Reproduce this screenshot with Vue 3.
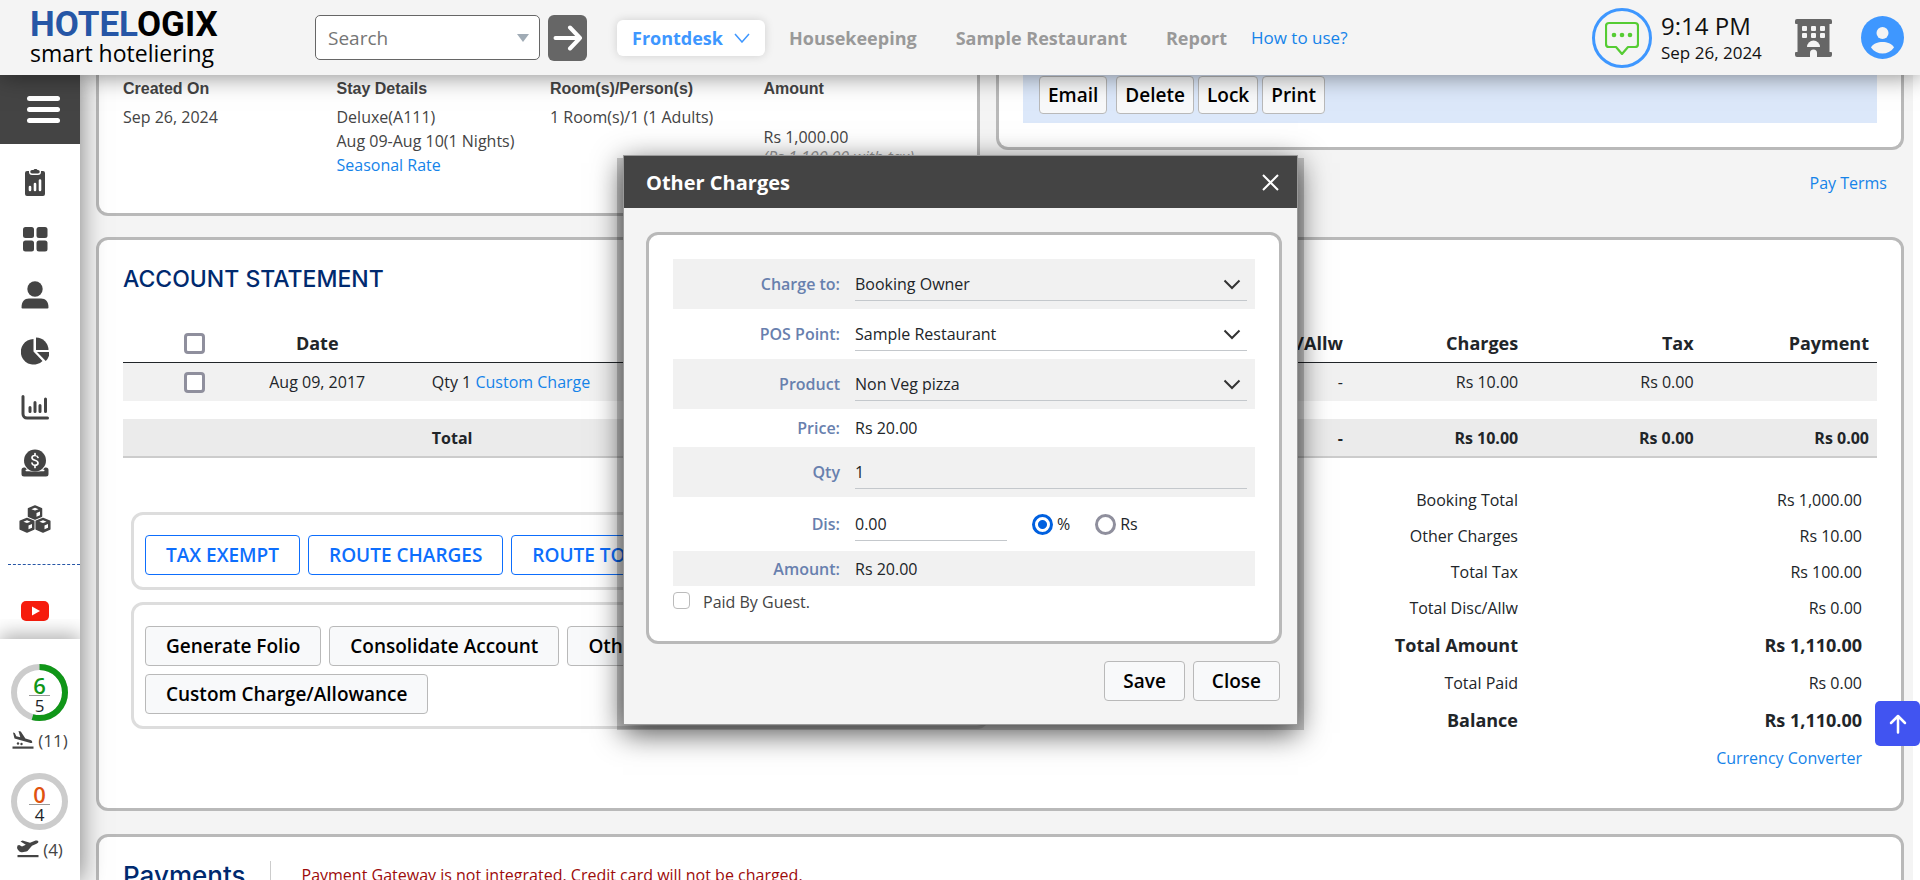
<script setup>
import { ref } from 'vue'

const tabs = ['Housekeeping', 'Sample Restaurant', 'Report']
const search = ref('')
const chargeTo = ref('Booking Owner')
const posPoint = ref('Sample Restaurant')
const product = ref('Non Veg pizza')
const qty = ref('1')
const discount = ref('0.00')
const discountType = ref('percent')
const paidByGuest = ref(false)

const totals = [
  { label: 'Booking Total', value: 'Rs 1,000.00' },
  { label: 'Other Charges', value: 'Rs 10.00' },
  { label: 'Total Tax', value: 'Rs 100.00' },
  { label: 'Total Disc/Allw', value: 'Rs 0.00' },
  { label: 'Total Amount', value: 'Rs 1,110.00', strong: true },
  { label: 'Total Paid', value: 'Rs 0.00' },
  { label: 'Balance', value: 'Rs 1,110.00', strong: true },
]
</script>

<template>
  <div class="app">
    <header class="topbar">
      <a class="logo" href="#" aria-label="Hotelogix smart hoteliering">
        <span class="logo-name"><span class="logo-blue">HOTEL</span>OGIX</span>
        <span class="logo-tag">smart hoteliering</span>
      </a>
      <form class="search" @submit.prevent>
        <div class="search-box">
          <input v-model="search" type="text" placeholder="Search" aria-label="Search" />
          <svg width="12" height="8" viewBox="0 0 12 8"><path d="M0 0h12L6 8z" fill="#a0abb5" /></svg>
        </div>
        <button class="go" type="submit" aria-label="Go">
          <svg width="30" height="26" viewBox="0 0 30 26" fill="none" stroke="#fff" stroke-width="4" stroke-linecap="round" stroke-linejoin="round"><path d="M2.500 13H27M17 2.500L27 13L17 23.500" /></svg>
        </button>
      </form>
      <nav class="tabs">
        <a class="tab active" href="#">Frontdesk
          <svg width="16" height="10" viewBox="0 0 16 10" fill="none" stroke="#3e97ff" stroke-width="1.500"><path d="M1 1l7 8l7-8" /></svg>
        </a>
        <a v-for="t in tabs" :key="t" class="tab" href="#">{{ t }}</a>
        <a class="help" href="#">How to use?</a>
      </nav>
      <div class="status">
        <button class="chat" aria-label="Messages">
          <svg width="34" height="34" viewBox="0 0 34 34" fill="none" stroke="#55cc33" stroke-width="2.200" stroke-linejoin="round">
            <path d="M4 2h26a3 3 0 0 1 3 3v18a3 3 0 0 1-3 3h-7l-6 7l-6-7H4a3 3 0 0 1-3-3V5a3 3 0 0 1 3-3z" />
            <g fill="#55cc33" stroke="none"><circle cx="9" cy="14" r="2.300" /><circle cx="17" cy="14" r="2.300" /><circle cx="25" cy="14" r="2.300" /></g>
          </svg>
        </button>
        <div class="clock"><span class="time">9:14 PM</span><span class="date">Sep 26, 2024</span></div>
        <button class="plain hotel" aria-label="Property">
          <svg width="37" height="38" viewBox="0 0 37 38">
            <path fill="#666" fill-rule="evenodd" d="M2 0h33a2 2 0 0 1 2 2v2a1 1 0 0 1-1 1h-1.500v28H36a1 1 0 0 1 1 1v2a2 2 0 0 1-2 2H22v-4a3.500 3.500 0 0 0-7 0v4H2a2 2 0 0 1-2-2v-2a1 1 0 0 1 1-1h1.500V5H1a1 1 0 0 1-1-1V2a2 2 0 0 1 2-2z" />
            <g fill="#f4f4f4"><rect x="7" y="7" width="5" height="5" rx="1" /><rect x="16" y="7" width="5" height="5" rx="1" /><rect x="25" y="7" width="5" height="5" rx="1" /><rect x="7" y="14" width="5" height="5" rx="1" /><rect x="16" y="14" width="5" height="5" rx="1" /><rect x="25" y="14" width="5" height="5" rx="1" /><path d="M12 28a6.500 6.500 0 0 1 13 0z" /></g>
          </svg>
        </button>
        <button class="plain" aria-label="Profile">
          <svg width="43" height="43" viewBox="0 0 43 43"><circle cx="21.500" cy="21.500" r="21.500" fill="#3e97ff" /><circle cx="21.500" cy="17" r="6" fill="#f4f4f4" /><path d="M10 31.500c2-4 7-5.500 11.500-5.500S31 27.500 33 31.500c-3 4-7 6-11.500 6s-8.500-2-11.500-6z" fill="#f4f4f4" /></svg>
        </button>
      </div>
    </header>

    <div class="body">
      <aside class="sidebar">
        <button class="menu" aria-label="Menu"><span></span><span></span><span></span></button>
        <nav class="side-icons">
          <a href="#" aria-label="Reports"><svg width="28" height="28" viewBox="0 0 28 28"><path fill="#444" d="M6 2h2v1a3 3 0 0 0 3 3h6a3 3 0 0 0 3-3V2h2a2 2 0 0 1 2 2v21a2 2 0 0 1-2 2H6a2 2 0 0 1-2-2V4a2 2 0 0 1 2-2zM11 1h1.500l1-1h2l1 1H17a1.500 1.500 0 0 1 0 3.500h-6A1.500 1.500 0 0 1 11 1z" /><g stroke="#fff" stroke-width="2.600" stroke-linecap="round"><path d="M9 18v3M14 15v6M19 11.500V21" /></g></svg></a>
          <a href="#" aria-label="Dashboard"><svg width="28" height="28" viewBox="0 0 28 28" fill="#444"><rect x="2" y="2" width="11" height="11" rx="2.500" /><rect x="15.500" y="2" width="11" height="11" rx="2.500" /><rect x="2" y="15.500" width="11" height="11" rx="2.500" /><rect x="15.500" y="15.500" width="11" height="11" rx="2.500" /></svg></a>
          <a href="#" aria-label="Guests"><svg width="28" height="28" viewBox="0 0 28 28" fill="#444"><circle cx="14" cy="8" r="7.700" /><path d="M0.500 26.500c0-6 3-9 7.500-9h12c4.500 0 7.500 3 7.500 9a1 1 0 0 1-1 1h-25a1 1 0 0 1-1-1z" /></svg></a>
          <a href="#" aria-label="Analytics"><svg width="28" height="28" viewBox="0 0 28 28" fill="#444"><path d="M12.500 2v12.500l9 9.500A12.800 12.800 0 1 1 12.500 2z" /><path d="M15 0.500A12.500 12.500 0 0 1 27.500 13H15z" /><path d="M16 15h12.500a12 12 0 0 1-3.800 9z" /></svg></a>
          <a href="#" aria-label="Charts"><svg width="28" height="28" viewBox="0 0 28 28" fill="none" stroke="#444" stroke-width="3" stroke-linecap="round"><path d="M2 3.500V21a4 4 0 0 0 4 4h20.500" /><path d="M9 14.500v4M14 9.500v9M19 12.500v6M24.500 6v12.500" /></svg></a>
          <a href="#" aria-label="Cashier"><svg width="28" height="28" viewBox="0 0 28 28"><path fill="#444" d="M3 18.500h22a2.500 2.500 0 0 1 2.500 2.500v4a2.500 2.500 0 0 1-2.500 2.500H3A2.500 2.500 0 0 1 .5 25v-4A2.500 2.500 0 0 1 3 18.500z" /><path d="M5.500 21.500h17" stroke="#fff" stroke-width="2" stroke-linecap="round" /><circle cx="14" cy="11.500" r="12" fill="#fff" /><circle cx="14" cy="11.500" r="11" fill="#444" /><path d="M17 8.500c-.5-1.500-1.700-2-3-2c-1.800 0-3 1-3 2.300c0 3.300 6 1.700 6 5.200c0 1.400-1.300 2.300-3 2.300c-1.500 0-2.800-.8-3-2.300M14 4.500v2M14 16.500v2" fill="none" stroke="#fff" stroke-width="1.700" stroke-linecap="round" /><path d="M4 24h20" stroke="#444" stroke-width="3" /></svg></a>
          <a href="#" aria-label="Inventory"><svg width="32" height="28" viewBox="0 0 32 28"><g fill="#444" stroke="#444" stroke-width="1.500" stroke-linejoin="round"><path d="M16 1l6.500 2.800v7.400L16 14l-6.500-2.800V3.800z" /><path d="M8 13.500l6.800 2.800V24L8 27l-6.800-3v-7.700z" /><path d="M24 13.500l6.800 2.800V24L24 27l-6.800-3v-7.700z" /></g><g fill="#fff"><path d="M16 2.800l3.600 1.400L16 5.600l-3.600-1.400zM8 15.300l3.600 1.400L8 18.100l-3.600-1.400zM24 15.300l3.600 1.400L24 18.100l-3.600-1.400zM17.500 8l3.500-1.400v3.600l-3.500 1.600zM9.500 20.500l3.500-1.400v3.600l-3.500 1.600zM25.500 20.500l3.500-1.400v3.600l-3.500 1.600z" /></g></svg></a>
        </nav>
        <hr class="dash" />
        <a class="youtube" href="#" aria-label="Videos"><svg width="28" height="20" viewBox="0 0 28 20"><rect width="28" height="20" rx="5" fill="#f61c0d" /><path d="M11 5.500l8 4.500l-8 4.500z" fill="#fff" /></svg></a>
        <div class="counters">
          <div class="counter">
            <div class="ring">
              <svg width="57" height="57" viewBox="0 0 57 57" fill="none" stroke-width="6"><circle cx="28.500" cy="28.500" r="25.500" stroke="#ccc" /><circle cx="28.500" cy="28.500" r="25.500" stroke="#109618" pathLength="100" stroke-dasharray="54.500 100" transform="rotate(-90 28.5 28.5)" /></svg>
              <div class="fraction"><b class="green">6</b><span>5</span></div>
            </div>
            <div class="moves">
              <svg width="22" height="18" viewBox="0 0 22 18" fill="#444"><path d="M1 1.500l1.800.5l1.500 3.200l4 1.100L6.500 0l2.300.6l4.600 7l5 1.400c1.600.5 2 1.500 1.800 2.800c-1 .3-1.700.2-2.500 0L2.500 7.600z" /><circle cx="6" cy="12.500" r="1.200" /><circle cx="9.500" cy="13" r="1.200" /><rect x="0.500" y="15.500" width="21" height="2.200" /></svg>
              <span>(11)</span>
            </div>
          </div>
          <div class="counter">
            <div class="ring">
              <svg width="57" height="57" viewBox="0 0 57 57" fill="none" stroke-width="6"><circle cx="28.500" cy="28.500" r="25.500" stroke="#ccc" /></svg>
              <div class="fraction"><b class="orange">0</b><span>4</span></div>
            </div>
            <div class="moves">
              <svg width="22" height="18" viewBox="0 0 22 18" fill="#444"><path d="M.5 5.500l1.700-.6l2.800 1.500l3.800-1.700L3.500 1.500l2-1l7.500 2.200l5-2c1.700-.5 3 0 3.500 1c-.4 1-1 1.500-2 2l-4.500 2l-4.500 5.300c-2 1-5 1.500-7 1c-1.500-.5-2.500-2-3.500-4z" /><rect x="0.500" y="15" width="21" height="2.200" /></svg>
              <span>(4)</span>
            </div>
          </div>
        </div>
      </aside>

      <main class="content">
        <div class="top-row">
          <section class="card booking">
            <div class="fact"><h3>Created On</h3><p>Sep 26, 2024</p></div>
            <div class="fact"><h3>Stay Details</h3><p>Deluxe(A111)</p><p>Aug 09-Aug 10(1 Nights)</p><p><a href="#">Seasonal Rate</a></p></div>
            <div class="fact"><h3>Room(s)/Person(s)</h3><p>1 Room(s)/1 (1 Adults)</p></div>
            <div class="fact amount"><h3>Amount</h3><p>Rs 1,000.00</p><p class="muted">(Rs 1,100.00 with tax)</p></div>
          </section>
          <div>
            <section class="card actions-card">
              <div class="actions"><button class="btn first">Email</button><button class="btn">Delete</button><button class="btn">Lock</button><button class="btn">Print</button></div>
            </section>
            <div class="terms"><a href="#">Pay Terms</a></div>
          </div>
        </div>

        <section class="card account">
          <h2>ACCOUNT STATEMENT</h2>
          <table class="statement">
            <colgroup><col class="c-check" /><col class="c-date" /><col /><col class="c-num" /><col class="c-num" /><col class="c-num" /><col class="c-num" /></colgroup>
            <thead>
              <tr><th class="check"><input type="checkbox" aria-label="Select all" /></th><th class="mid">Date</th><th class="left"></th><th>Disc/Allw</th><th>Charges</th><th>Tax</th><th>Payment</th></tr>
            </thead>
            <tbody>
              <tr class="line"><td class="check"><input type="checkbox" aria-label="Select Aug 09, 2017" /></td><td class="mid">Aug 09, 2017</td><td class="left">Qty 1 <a href="#">Custom Charge</a></td><td>-</td><td>Rs 10.00</td><td>Rs 0.00</td><td></td></tr>
              <tr class="space"><td colspan="7"></td></tr>
            </tbody>
            <tfoot>
              <tr><td></td><td></td><td class="left">Total</td><td>-</td><td>Rs 10.00</td><td>Rs 0.00</td><td>Rs 0.00</td></tr>
            </tfoot>
          </table>
          <div class="lower">
            <div class="groups">
              <div class="group"><button class="btn blue">TAX EXEMPT</button><button class="btn blue">ROUTE CHARGES</button><button class="btn blue">ROUTE TO GROUP</button></div>
              <div class="group"><button class="btn">Generate Folio</button><button class="btn">Consolidate Account</button><button class="btn">Other Charges</button><button class="btn">Custom Charge/Allowance</button></div>
            </div>
            <div class="totals">
              <dl>
                <div v-for="t in totals" :key="t.label" :class="{ strong: t.strong }"><dt>{{ t.label }}</dt><dd>{{ t.value }}</dd></div>
              </dl>
              <a href="#">Currency Converter</a>
            </div>
          </div>
        </section>

        <section class="card payments">
          <h2>Payments</h2>
          <p>Payment Gateway is not integrated. Credit card will not be charged.</p>
        </section>
      </main>
    </div>

    <button class="to-top" aria-label="Back to top"><svg width="18" height="20" viewBox="0 0 18 20" fill="none" stroke="#fff" stroke-width="2.500" stroke-linecap="round" stroke-linejoin="round"><path d="M9 18.500V2M2 9l7-7l7 7" /></svg></button>

    <div class="dialog-wrap">
      <form class="dialog" role="dialog" aria-labelledby="dialog-title" @submit.prevent>
        <div class="dialog-head">
          <h2 id="dialog-title">Other Charges</h2>
          <button class="plain" type="button" aria-label="Dismiss"><svg width="17" height="17" viewBox="0 0 17 17" fill="none" stroke="#fff" stroke-width="2"><path d="M1 1l15 15M16 1L1 16" /></svg></button>
        </div>
        <div class="panel">
          <div class="field shade tall">
            <label for="charge-to">Charge to:</label>
            <div class="select"><select id="charge-to" v-model="chargeTo"><option>Booking Owner</option></select><svg width="18" height="11" viewBox="0 0 18 11"><path d="M1.500 1.500L9 9l7.500-7.500" /></svg></div>
          </div>
          <div class="field tall">
            <label for="pos-point">POS Point:</label>
            <div class="select"><select id="pos-point" v-model="posPoint"><option>Sample Restaurant</option></select><svg width="18" height="11" viewBox="0 0 18 11"><path d="M1.500 1.500L9 9l7.500-7.500" /></svg></div>
          </div>
          <div class="field shade tall">
            <label for="product">Product</label>
            <div class="select"><select id="product" v-model="product"><option>Non Veg pizza</option></select><svg width="18" height="11" viewBox="0 0 18 11"><path d="M1.500 1.500L9 9l7.500-7.500" /></svg></div>
          </div>
          <div class="field price"><span class="label">Price:</span><span>Rs 20.00</span></div>
          <div class="field shade tall"><label for="qty">Qty</label><input id="qty" v-model="qty" class="text" type="text" /></div>
          <div class="field taller">
            <label for="dis">Dis:</label>
            <div class="discount">
              <input id="dis" v-model="discount" class="text short" type="text" />
              <label class="option"><input v-model="discountType" type="radio" name="type" value="percent" />%</label>
              <label class="option"><input v-model="discountType" type="radio" name="type" value="rs" />Rs</label>
            </div>
          </div>
          <div class="field shade low"><span class="label">Amount:</span><span>Rs 20.00</span></div>
          <label class="guest"><input v-model="paidByGuest" type="checkbox" />Paid By Guest.</label>
        </div>
        <div class="dialog-foot"><button class="btn" type="submit">Save</button><button class="btn" type="button">Close</button></div>
      </form>
    </div>
  </div>
</template>

<style>
body { margin: 0; background: #fff; }
</style>

<style scoped>
* { box-sizing: border-box; }
.app { position: relative; height: 100vh; overflow: hidden; display: flex; flex-direction: column; font-family: "Open Sans", "Noto Sans", sans-serif; font-size: 16px; color: #212529; }
a { color: #1583e9; text-decoration: none; }
h2, h3, p, dl, dd { margin: 0; }
button, input, select { font-family: inherit; }
button { cursor: pointer; }
svg { display: block; flex: none; }
.plain { border: 0; background: none; padding: 0; }

.topbar { position: relative; z-index: 3; flex: none; height: 75px; display: flex; align-items: center; padding: 0 16px 0 30px; background: #f4f4f4; box-shadow: 0 0 24px rgba(0, 0, 0, 0.5); }
.logo { display: flex; flex-direction: column; width: 285px; color: #000; }
.logo-name { font: 700 35px/30px Roboto, sans-serif; }
.logo-blue { color: #2656a6; }
.logo-tag { font-size: 23px; line-height: 26px; }
.search { display: flex; align-items: center; gap: 8px; }
.search-box { display: flex; align-items: center; width: 225px; height: 45px; padding: 0 10px 0 12px; border: 1px solid #666; border-radius: 5px; background: #fff; }
.search-box input { flex: 1; min-width: 0; padding: 0; border: 0; outline: 0; background: none; font-size: 19px; }
.search-box input::placeholder { color: #757575; }
.go { display: grid; place-items: center; width: 39px; height: 46px; padding: 0; border: 0; border-radius: 6px; background: #666; }
.tabs { display: flex; align-items: center; gap: 9px; margin-left: 30px; }
.tab { display: flex; align-items: center; gap: 11px; height: 36px; padding: 0 15px; border-radius: 6px; font-size: 18px; font-weight: 700; color: #999; }
.active { background: #fff; color: #3e97ff; box-shadow: 0 0 10px rgba(0, 0, 0, 0.15); }
.help { font-size: 17px; }
.status { display: flex; align-items: center; margin-left: auto; }
.chat { display: grid; place-items: center; width: 60px; height: 60px; padding: 0; border: 3px solid #3e97ff; border-radius: 50%; background: none; }
.clock { display: flex; flex-direction: column; width: 143px; padding-left: 9px; color: #111; }
.time { font-size: 24px; line-height: 30px; }
.date { font-size: 17px; line-height: 24px; }
.hotel { margin-right: 29px; }

.body { flex: 1; min-height: 0; display: flex; background: #f4f4f4; margin-right: 7px; }
.sidebar { position: relative; z-index: 2; flex: none; display: flex; flex-direction: column; width: 80px; background: #fff; box-shadow: 0 0 24px rgba(0, 0, 0, 0.5); }
.menu { display: flex; flex-direction: column; gap: 6px; height: 69px; padding: 21px 20px 21px 27px; border: 0; background: #444; }
.menu span { height: 5px; width: 33px; border-radius: 3px; background: #fff; }
.side-icons { display: flex; flex-direction: column; align-items: center; gap: 28px; width: 70px; padding-top: 25px; }
.dash { width: 72px; margin: 31px 0 0 8px; border: 0; border-top: 1px dashed #2656a6; }
.youtube { margin: 36px 0 0 21px; }
.counters { flex: 1; display: flex; flex-direction: column; gap: 21px; margin-top: 18px; padding-top: 25px; background: #fff; box-shadow: 0 -5px 18px rgba(0, 0, 0, 0.3); clip-path: inset(-20px 0 0 0); }
.ring { position: relative; width: 57px; margin: 0 0 7px 11px; }
.fraction { position: absolute; inset: 0; display: flex; flex-direction: column; align-items: center; padding-top: 12px; }
.fraction b { width: 21px; border-bottom: 1px solid #999; font-size: 22px; line-height: 19px; font-weight: 600; text-align: center; }
.fraction span { font-size: 17px; line-height: 20px; }
.green { color: #109618; }
.orange { color: #e0530f; }
.moves { display: flex; align-items: center; justify-content: center; gap: 4px; height: 24px; font-size: 17px; color: #444; }

.content { flex: 1; min-width: 0; padding: 0 9px 0 16px; overflow: hidden; }
.card { border: 3px solid #b9b9b9; border-radius: 12px; background: #fff; }
.top-row { display: grid; grid-template-columns: 884fr 908fr; gap: 16px; height: 140px; }
.booking { display: grid; grid-template-columns: repeat(4, 1fr); padding: 2px 0 0 24px; border-top: 0; border-radius: 0 0 12px 12px; color: #444; }
.fact h3 { margin-bottom: 4px; font: 700 16px/24px "Liberation Sans", sans-serif; }
.fact p { font-size: 16px; line-height: 24px; white-space: nowrap; }
.amount p { line-height: 21px; }
.amount h3 { margin-bottom: 26px; }
.amount .muted { line-height: 18px; color: #999; font-style: italic; }
.actions-card { height: 75px; padding: 0 24px; border-top: 0; border-radius: 0 0 12px 12px; }
.actions { display: flex; gap: 4px; height: 48px; padding: 1px 16px; background: #dce8fa; }
.actions .btn { height: 38px; padding: 0 8px; }
.actions .first { margin-right: 5px; }
.terms { padding: 21px 17px; text-align: right; line-height: 24px; }

.btn { height: 40px; padding: 0 20px; border: 1px solid #b9b9b9; border-radius: 4px; background: #f8f9fa; color: #000; font-size: 19px; font-weight: 600; white-space: nowrap; }
.blue { border-color: #0d6efd; background: #fff; color: #0d6efd; }

.account { height: 574px; margin-top: 22px; padding: 24px 24px 0; }
.card > h2 { font: 500 23px/30px Inter, sans-serif; color: #002a6f; }
.statement { width: 100%; margin-top: 30px; table-layout: fixed; border-collapse: separate; border-spacing: 0; }
.c-check { width: 5%; }
.c-date { width: 12.150%; }
.c-num { width: 10%; }
.statement th, .statement td { height: 37px; padding: 0 8px; text-align: right; white-space: nowrap; }
.statement th { height: 39px; border-bottom: 1px solid #212529; font-size: 18px; }
.statement .line td { height: 38px; background: #f1f1f1; }
.statement .mid { text-align: center; }
.statement .left { text-align: left; }
.statement .check { padding-right: 6px; }
.statement .space td { height: 18px; }
.statement tfoot td { height: 39px; background: #ebebeb; border-bottom: 2px solid #ccc; font-weight: 700; }
.check input { appearance: none; display: block; width: 21px; height: 21px; margin: 0 0 0 auto; border: 3px solid #8f8f9d; border-radius: 4px; background: #fff; }
.lower { display: grid; grid-template-columns: 866fr 888fr; }
.groups { display: flex; flex-direction: column; gap: 12px; padding: 54px 0 0 8px; }
.group { display: flex; flex-wrap: wrap; gap: 8px; padding: 20px 11px 12px; border: 3px solid #ddd; border-radius: 12px; }
.group + .group { padding-top: 21px; }
.totals { padding: 24px 15px 0 0; text-align: right; }
.totals dl div { display: grid; grid-template-columns: 1fr 344px; line-height: 36px; }
.totals .strong { font-size: 18px; line-height: 39px; font-weight: 700; }
.totals a { line-height: 36px; }

.payments { display: flex; align-items: flex-start; gap: 24px; margin-top: 23px; padding: 24px 24px 40px; }
.payments > h2 { font-size: 26px; }
.payments p { padding-left: 31px; border-left: 1px solid #ccc; line-height: 28px; color: #9d0b0b; }

.to-top { position: absolute; z-index: 4; right: 0; top: 701px; display: grid; place-items: center; width: 45px; height: 45px; padding: 0; border: 0; border-radius: 5px; background: #4154f1; }

.dialog-wrap { position: absolute; z-index: 5; left: 50%; top: 155px; width: 675px; margin-left: -337px; }
.dialog-wrap::before { content: ""; position: absolute; inset: 3px -6px -5px; background: rgba(0, 0, 0, 0.2); }
.dialog { position: relative; border: 1px solid #999; background: #f4f4f4; box-shadow: 0 8px 28px rgba(0, 0, 0, 0.7); }
.dialog-head { display: flex; align-items: center; justify-content: space-between; height: 52px; padding: 0 18px 0 22px; background: #444; }
.dialog-head h2 { font-size: 20px; font-weight: 700; color: #fff; }
.panel { margin: 24px 15px 0 22px; height: 412px; padding: 24px; border: 3px solid #b9b9b9; border-radius: 12px; background: #fff; }
.field { display: grid; grid-template-columns: 167px 1fr; column-gap: 15px; align-items: center; padding-right: 8px; }
.shade { background: #f1f1f1; }
.tall { height: 50px; }
.taller { height: 54px; }
.price { height: 38px; }
.low { height: 35px; }
.field > label, .label { font-weight: 600; color: #6880ae; text-align: right; }
.select { position: relative; }
.select svg { position: absolute; right: 6px; top: 12px; fill: none; stroke: #333; stroke-width: 2; pointer-events: none; }
.select select, .text { display: block; width: 100%; height: 34px; padding: 0; border: 0; border-bottom: 1px solid #c4c8cc; border-radius: 0; outline: 0; background: transparent; color: #212529; font-size: 16px; }
.select select { appearance: none; }
.discount { display: flex; align-items: center; }
.text.short { width: 152px; }
.option { display: flex; align-items: center; gap: 4px; margin-left: 25px; }
.option input { appearance: none; width: 21px; height: 21px; margin: 0; border: 3px solid #8f8f9d; border-radius: 50%; background: #fff; }
.option input:checked { border-color: #0060df; background: radial-gradient(#0060df 4px, #fff 5px); }
.guest { display: flex; align-items: center; gap: 13px; height: 32px; color: #444; }
.guest input { appearance: none; width: 17px; height: 17px; margin: 0 0 4px; border: 1px solid #bbb; border-radius: 4px; background: #fff; }
.dialog-foot { display: flex; justify-content: flex-end; gap: 8px; padding: 17px 17px 23px; }
.dialog-foot .btn { padding: 0 18px; }
</style>
